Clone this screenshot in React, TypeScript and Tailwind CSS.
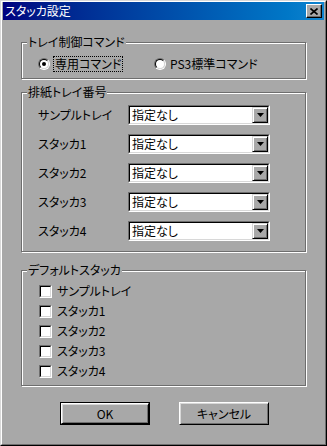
import React from 'react';

const face = 'bg-[#a8a8a8]';

function GroupBox({ title, className, children }: { title: string; className: string; children: React.ReactNode }) {
  return (
    <div className={`relative border border-[#6e6e6e] shadow-[inset_1px_1px_0_#fff,1px_1px_0_#fff] ${className}`}>
      <span className={`absolute -top-[8px] left-[5px] px-[1px] leading-[14px] ${face}`}>{title}</span>
      {children}
    </div>
  );
}

function Radio({ checked }: { checked?: boolean }) {
  return (
    <span className="flex h-[12px] w-[12px] shrink-0 items-center justify-center rounded-full border border-t-[#6e6e6e] border-l-[#6e6e6e] border-b-white border-r-white">
      <span className="flex h-[10px] w-[10px] items-center justify-center rounded-full border border-t-black border-l-black border-b-[#d8d8d8] border-r-[#d8d8d8] bg-white">
        {checked && <span className="h-[4px] w-[4px] rounded-full bg-black" />}
      </span>
    </span>
  );
}

function Checkbox() {
  return (
    <span className="flex h-[13px] w-[13px] shrink-0 border border-t-[#6e6e6e] border-l-[#6e6e6e] border-b-white border-r-white">
      <span className="flex-1 border border-t-black border-l-black border-b-[#d8d8d8] border-r-[#d8d8d8] bg-white" />
    </span>
  );
}

function Combo() {
  return (
    <div className="flex h-[20px] w-[142px] border border-t-[#6e6e6e] border-l-[#6e6e6e] border-b-white border-r-white">
      <div className="flex flex-1 border border-t-black border-l-black border-b-[#d8d8d8] border-r-[#d8d8d8] bg-white">
        <span className="flex-1 pl-[2px] leading-[16px]">指定なし</span>
        <span className={`flex w-[16px] items-center justify-center border border-t-[#d8d8d8] border-l-[#d8d8d8] border-b-black border-r-black shadow-[inset_1px_1px_0_#fff,inset_-1px_-1px_0_#6e6e6e] ${face}`}>
          <svg width="7" height="4" viewBox="0 0 7 4">
            <polygon points="0,0 7,0 3.5,4" fill="#000" />
          </svg>
        </span>
      </div>
    </div>
  );
}

function Button({ label, isDefault }: { label: string; isDefault?: boolean }) {
  return (
    <div className={`flex h-[23px] w-[90px] ${isDefault ? 'border border-black' : ''}`}>
      <div className="flex flex-1 items-center justify-center border border-t-white border-l-white border-b-black border-r-black shadow-[inset_1px_1px_0_#d8d8d8,inset_-1px_-1px_0_#6e6e6e]">
        {label}
      </div>
    </div>
  );
}

const rows = ['サンプルトレイ', 'スタッカ1', 'スタッカ2', 'スタッカ3', 'スタッカ4'];

export default function App() {
  return (
    <div className={`h-[446px] w-[327px] border border-t-[#d8d8d8] border-l-[#d8d8d8] border-b-black border-r-black text-[12px] text-black font-['Noto_Sans_CJK_JP',sans-serif] [font-feature-settings:'palt'] ${face}`}>
      <div className="h-full border border-t-white border-l-white border-b-[#6e6e6e] border-r-[#6e6e6e] px-[1px]">
        <div className="flex h-[18px] items-center justify-between bg-gradient-to-r from-[#000080] to-[#1084d0] pl-[2px] pr-[2px]">
          <span className="leading-[14px] text-white">スタッカ設定</span>
          <span className={`flex h-[14px] w-[16px] items-center justify-center border border-t-white border-l-white border-b-black border-r-black shadow-[inset_-1px_-1px_0_#6e6e6e] ${face}`}>
            <svg width="8" height="7" viewBox="0 0 8 7">
              <path d="M0.5 0.5 L7.5 6.5 M7.5 0.5 L0.5 6.5" stroke="#000" strokeWidth="1.6" />
            </svg>
          </span>
        </div>

        <div className="ml-[18px] flex w-[285px] flex-col">
          <GroupBox title="トレイ制御コマンド" className="mt-[22px] h-[37px]">
            <div className="flex h-[16px] items-center pl-[16px] pt-0 mt-[13px]">
              <div className="flex w-[116px] items-center gap-[3px]">
                <Radio checked />
                <span className="border border-dotted border-black px-[1px] leading-[14px]">専用コマンド</span>
              </div>
              <div className="flex items-center gap-[3px]">
                <Radio />
                <span className="px-[1px] leading-[14px]">PS3標準コマンド</span>
              </div>
            </div>
          </GroupBox>

          <GroupBox title="排紙トレイ番号" className="mt-[13px] h-[160px]">
            <div className="grid grid-cols-[90px_142px] gap-y-[9px] pl-[16px] pt-[12px]">
              {rows.map((r) => (
                <React.Fragment key={r}>
                  <span className="flex h-[20px] items-center">{r}</span>
                  <Combo />
                </React.Fragment>
              ))}
            </div>
          </GroupBox>

          <GroupBox title="デフォルトスタッカ" className="mt-[18px] h-[116px]">
            <div className="flex flex-col pl-[17px] pt-[10px]">
              {rows.map((r) => (
                <div key={r} className="flex h-[20px] items-center gap-[5px]">
                  <Checkbox />
                  <span className="leading-[14px]">{r}</span>
                </div>
              ))}
            </div>
          </GroupBox>

          <div className="ml-[39px] mt-[16px] flex gap-[29px]">
            <Button label="OK" isDefault />
            <Button label="キャンセル" />
          </div>
        </div>
      </div>
    </div>
  );
}
